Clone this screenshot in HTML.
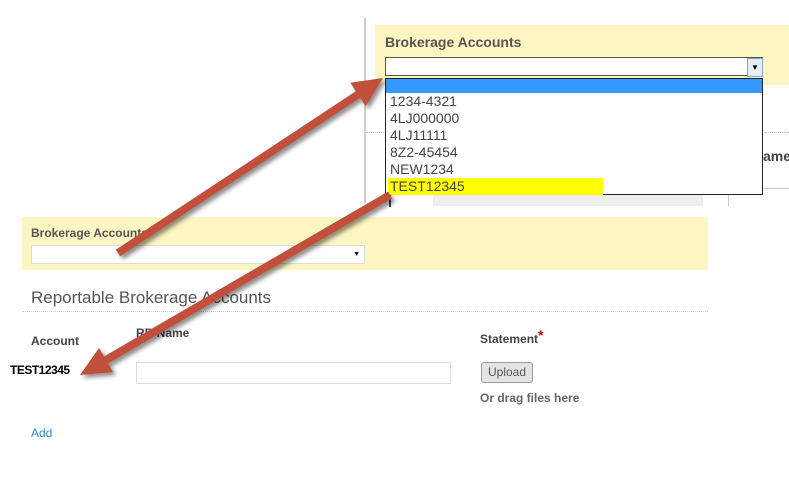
<!DOCTYPE html>
<html><head><style>
body{margin:0;width:789px;height:500px;background:#fff;position:relative;overflow:hidden;font-family:"Liberation Sans",Arial,sans-serif}
.a{position:absolute}
</style></head><body>
<div class="a" style="left:364px;top:18px;width:2px;height:185px;background:#ccc"></div>
<div class="a" style="left:366px;top:132px;width:20px;border-top:1px dotted #bbb"></div>
<div class="a" style="left:765px;top:132px;width:24px;border-top:1px dotted #bbb"></div>
<div class="a" style="left:763px;top:148px;font-size:14px;font-weight:bold;color:#444">ame</div>
<div class="a" style="left:433px;top:193px;width:270px;height:13px;background:#eee"></div>
<div class="a" style="left:728px;top:188px;width:61px;border-top:1px solid #ccc"></div>
<div class="a" style="left:728px;top:188px;width:1px;height:18px;background:#ccc"></div>
<div class="a" style="left:389px;top:193px;width:2px;height:14px;background:#444"></div>

<div class="a" style="left:375px;top:25px;width:414px;height:60px;background:#fdf6c2"></div>
<div class="a" style="left:385px;top:34px;font-size:14px;font-weight:bold;color:#555">Brokerage Accounts</div>
<div class="a" style="left:385px;top:57px;width:378px;height:19px;border:1px solid #555;background:#fff;box-sizing:border-box"></div>
<div class="a" style="left:747px;top:58px;width:16px;height:19px;border:1px solid #7aa7d6;background:#e6eef8;box-sizing:border-box;font-size:8px;text-align:center;line-height:17px">&#9660;</div>
<div class="a" style="left:385px;top:78px;width:378px;height:117px;border:1px solid #222;background:#fff;box-sizing:border-box;font-size:14px;color:#444;line-height:17px">
<div style="height:14px;background:#3399ff"></div>
<div style="padding-left:4px">1234-4321</div>
<div style="padding-left:4px">4LJ000000</div>
<div style="padding-left:4px">4LJ11111</div>
<div style="padding-left:4px">8Z2-45454</div>
<div style="padding-left:4px">NEW1234</div>
<div style="padding-left:4px;background:#ff0;width:213px;margin-left:2px;padding-left:2px">TEST12345</div>
</div>

<div class="a" style="left:22px;top:217px;width:686px;height:53px;background:#fdf6c2"></div>
<div class="a" style="left:31px;top:226px;font-size:12px;font-weight:bold;color:#555">Brokerage Accounts</div>
<div class="a" style="left:31px;top:245px;width:334px;height:19px;border:1px solid #ddd;background:#fff;box-sizing:border-box;font-size:7px;text-align:right;padding-right:4px;line-height:18px">&#9660;</div>
<div class="a" style="left:31px;top:288px;font-size:17px;color:#555">Reportable Brokerage Accounts</div>
<div class="a" style="left:22px;top:311px;width:686px;border-top:1px dotted #ccc"></div>
<div class="a" style="left:31px;top:334px;font-size:12px;font-weight:bold;color:#444">Account</div>
<div class="a" style="left:136px;top:326px;font-size:12px;font-weight:bold;color:#444">RB Name</div>
<div class="a" style="left:480px;top:327px;font-size:12px;font-weight:bold;color:#444">Statement<span style="color:#c00;font-size:14px;vertical-align:3px">*</span></div>
<div class="a" style="left:10px;top:363px;font-size:12px;font-weight:bold;color:#000;letter-spacing:-0.5px">TEST12345</div>
<div class="a" style="left:136px;top:362px;width:315px;height:22px;border:1px solid #ddd;box-sizing:border-box"></div>
<div class="a" style="left:481px;top:362px;width:52px;height:21px;border:1px solid #999;border-radius:3px;background:#e4e4e4;box-sizing:border-box;font-size:12px;color:#555;text-align:center;line-height:19px">Upload</div>
<div class="a" style="left:480px;top:391px;font-size:12px;font-weight:bold;color:#666">Or drag files here</div>
<div class="a" style="left:31px;top:426px;font-size:12px;color:#2a8ad2">Add</div>

<svg class="a" style="left:0;top:0" width="789" height="500">
<defs><filter id="s"><feDropShadow dx="3" dy="3" stdDeviation="2" flood-color="#000" flood-opacity="0.45"/></filter></defs>
<g fill="#c0503a" filter="url(#s)">
<polygon points="115.8,249.7 355.8,91.2 350.3,82.8 383,78 365.7,106.2 360.2,97.8 120.2,256.3"/>
<polygon points="388,191.5 104,356.5 99,347.9 80,375 113,372.1 108,363.5 392,198.5"/>
</g>
</svg>
</body></html>
